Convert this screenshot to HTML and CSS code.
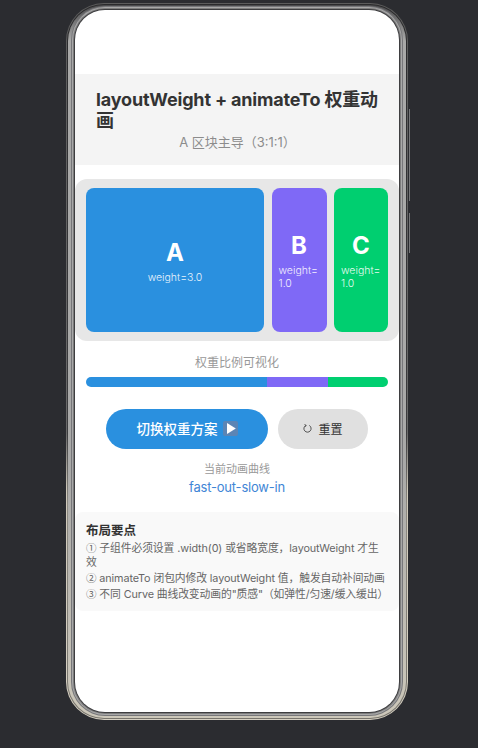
FILE: index.html
```html
<!DOCTYPE html>
<html lang="zh">

<head>
    <meta charset="UTF-8">
    <meta name="viewport" content="width=device-width, initial-scale=1.0">
    <title>layoutWeight + animateTo</title>
    <link rel="stylesheet" href="styles.css">
</head>

<body>
    <div class="phone">
        <span class="side-key key-one"></span>
        <span class="side-key key-two"></span>
        <div class="bezel-mid">
            <div class="bezel-inner">
                <main class="screen">
                    <header class="title-block">
                        <h1 class="title">layoutWeight + animateTo 权重动画</h1>
                        <p class="subtitle">A 区块主导（3:1:1）</p>
                    </header>

                    <section class="weight-row">
                        <div class="block block-a">
                            <span class="block-name">A</span>
                            <span class="block-weight">weight=3.0</span>
                        </div>
                        <div class="block block-b">
                            <span class="block-name">B</span>
                            <span class="block-weight">weight=1.0</span>
                        </div>
                        <div class="block block-c">
                            <span class="block-name">C</span>
                            <span class="block-weight">weight=1.0</span>
                        </div>
                    </section>

                    <section class="ratio">
                        <p class="ratio-label">权重比例可视化</p>
                        <div class="ratio-bar">
                            <span class="seg seg-a"></span>
                            <span class="seg seg-b"></span>
                            <span class="seg seg-c"></span>
                        </div>
                    </section>

                    <div class="actions">
                        <button class="btn btn-main">切换权重方案
                            <svg class="play-icon" viewBox="0 0 15 15" width="15" height="15">
                                <rect width="15" height="15" rx="2" fill="#5b85b5" />
                                <path d="M4 2 L12.8 7.5 L4 13 Z" fill="#fff" />
                            </svg>
                        </button>
                        <button class="btn btn-reset">
                            <svg class="reset-icon" viewBox="0 0 10 10" width="9" height="9">
                                <path d="M3 1.6 A4 4 0 1 0 7 1.6" fill="none" stroke="#333" stroke-width="0.9" />
                                <path d="M1.6 0.6 L3.6 1.4 L2.6 3.2" fill="none" stroke="#333" stroke-width="0.8" />
                            </svg>
                            重置
                        </button>
                    </div>

                    <div class="curve">
                        <p class="curve-label">当前动画曲线</p>
                        <p class="curve-name">fast-out-slow-in</p>
                    </div>

                    <section class="notes">
                        <h2 class="notes-title">布局要点</h2>
                        <p><span class="num">①</span> 子组件必须设置 .width(0) 或省略宽度，layoutWeight 才生<br>效</p>
                        <p><span class="num">②</span> animateTo 闭包内修改 layoutWeight 值，触发自动补间动画</p>
                        <p><span class="num">③</span> 不同 Curve 曲线改变动画的"质感"（如弹性/匀速/缓入缓出）</p>
                    </section>
                </main>
            </div>
        </div>
    </div>
</body>

</html>
```

FILE: styles.css
```css
* {
    box-sizing: border-box;
}

body {
    margin: 0;
    height: 748px;
    overflow: hidden;
    background: #2b2c30;
    font-family: "Inter", "Noto Sans CJK SC", sans-serif;
}

/* Phone frame: nested rings, the stripes come from the screen shadow */
.phone {
    position: relative;
    width: 342px;
    height: 717px;
    margin: 3px 0 0 66px;
    padding: 1px;
    border-radius: 38px;
    background: linear-gradient(#5c5c5c 0, #6a6a6a 60%, #cfc9bb 68%, #d6d0c2 100%);
}

.bezel-mid {
    height: 100%;
    padding: 1px;
    border-radius: 37px;
    background: linear-gradient(#2a2a2c 0, #3c3c3e 60%, #8d8a82 70%, #77746c 100%);
}

.bezel-inner {
    height: 100%;
    padding: 5px 7px 6px;
    border-radius: 36px;
    background: linear-gradient(#4a4a4c 0, #a9a9a8 5%, #a9a9a8 65%, #cdc8ba 100%);
}

.side-key {
    position: absolute;
    right: -2px;
    width: 1px;
    background: #77787a;
}

.key-one {
    top: 106px;
    height: 92px;
}

.key-two {
    top: 210px;
    height: 40px;
}

.screen {
    height: 100%;
    padding-top: 64px;
    border-radius: 30px;
    background: #fff;
    overflow: hidden;
    box-shadow: 0 0 0 1px #3e3e40, 0 0 0 2px #7c7c7c, 0 0 0 3px #a8a8a8, 0 0 0 4px #77777a;
}

.title-block {
    height: 91px;
    padding: 15px 15px 0 21px;
    background: #f4f4f4;
}

.title {
    margin: 0;
    font-size: 18px;
    line-height: 21px;
    font-weight: 700;
    letter-spacing: -0.17px;
    color: #333;
}

.subtitle {
    margin: 2px 0 0;
    padding-right: 5px;
    font-size: 13px;
    line-height: 18px;
    text-align: center;
    color: #8c8c8c;
}

.weight-row {
    display: flex;
    gap: 7.5px;
    height: 162px;
    margin-top: 14px;
    padding: 9px 11px;
    border-radius: 12px;
    background: #e7e7e7;
}

.block {
    display: flex;
    flex-direction: column;
    justify-content: center;
    padding-top: 1px;
    border-radius: 8px;
    color: #fff;
}

.block-a {
    flex: 1;
    align-items: center;
    background: #2a90df;
}

.block-b {
    width: 55px;
    background: #7f69f6;
}

.block-c {
    width: 54px;
    background: #00cf70;
}

.block-b,
.block-c {
    padding: 1px 7px 0;
    align-items: flex-start;
}

.block-name {
    font-size: 24px;
    line-height: 30px;
    font-weight: 700;
}

.block-b .block-name,
.block-c .block-name {
    align-self: center;
}

.block-weight {
    margin-top: 3px;
    font-size: 10.5px;
    line-height: 13px;
    font-weight: 300;
    opacity: 0.9;
    word-break: break-all;
}

.ratio {
    margin-top: 14px;
    padding: 0 11px;
}

.ratio-label {
    margin: 0;
    font-size: 12px;
    line-height: 16px;
    text-align: center;
    color: #999;
}

.ratio-bar {
    display: flex;
    height: 10px;
    margin-top: 6px;
    border-radius: 5px;
    overflow: hidden;
}

.seg-a {
    flex: 3;
    background: #2a90df;
}

.seg-b {
    flex: 1;
    background: #7f69f6;
}

.seg-c {
    flex: 1;
    background: #00cf70;
}

.actions {
    display: flex;
    justify-content: center;
    gap: 10px;
    margin-top: 22px;
}

.btn {
    display: flex;
    align-items: center;
    justify-content: center;
    height: 40px;
    padding: 0 0 2px;
    border: 0;
    border-radius: 20px;
    font-family: inherit;
}

.btn-main {
    gap: 5px;
    width: 162px;
    font-size: 13.5px;
    font-weight: 500;
    color: #fff;
    background: #2a90df;
}

.btn-reset {
    gap: 6px;
    width: 90px;
    font-size: 12px;
    color: #333;
    background: #e0e0e0;
}

.curve {
    margin-top: 13px;
    text-align: center;
}

.curve-label {
    margin: 0;
    font-size: 11px;
    line-height: 15px;
    color: #999;
}

.curve-name {
    margin: 1px 0 0;
    font-size: 13px;
    line-height: 18px;
    letter-spacing: -0.2px;
    color: #3f86d6;
}

.notes {
    height: 99px;
    margin-top: 16px;
    padding: 10px 11px 0;
    border-radius: 8px;
    background: #f9f9f9;
}

.notes-title {
    margin: 0 0 1.5px;
    font-size: 12.5px;
    line-height: 17px;
    font-weight: 700;
    color: #333;
}

.notes p {
    margin: 0;
    font-size: 10.8px;
    line-height: 14.7px;
    letter-spacing: -0.1px;
    white-space: nowrap;
    color: #666;
}

.num {
    font-family: "Noto Sans CJK SC", sans-serif;
    font-size: 10.5px;
}
```
